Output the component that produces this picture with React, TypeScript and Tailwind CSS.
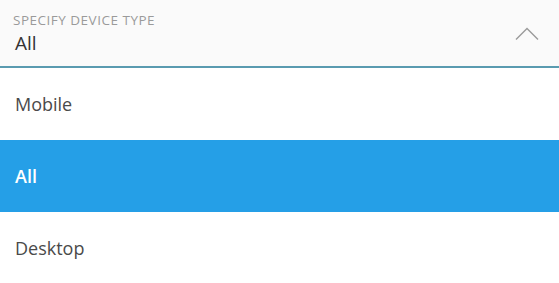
import React from "react";

const options = ["Mobile", "All", "Desktop"];

const App: React.FC = () => {
  const selected = "All";

  return (
    <div className="w-[559px] h-[283px] bg-white overflow-hidden" style={{ fontFamily: '"Open Sans", "Noto Sans", sans-serif' }}>
      <div className="h-[68px] bg-[#fafafa] border-b-2 border-[#5a9bb0] pl-[13px] pr-[20px] flex items-center justify-between">
        <div className="flex flex-col pt-[2px]">
          <span className="text-[13.5px] leading-[14px] text-[#9a9a9a] tracking-[0.5px]">SPECIFY DEVICE TYPE</span>
          <span className="text-[19px] leading-[24px] text-[#333] mt-[4px] pl-[2px]">{selected}</span>
        </div>
        <svg width="24" height="14" viewBox="0 0 24 14" className="mt-[2px]">
          <path d="M1 12.5 L12 1.5 L23 12.5" fill="none" stroke="#9a9a9a" strokeWidth="1.4" />
        </svg>
      </div>
      <ul className="flex flex-col">
        {options.map((opt) => (
          <li
            key={opt}
            className={
              opt === selected
                ? "h-[72px] flex items-center px-[15px] bg-[#259fe7] text-white text-[18px] font-semibold"
                : "h-[72px] flex items-center px-[15px] text-[#4a4a4a] text-[18px]"
            }
          >
            {opt}
          </li>
        ))}
      </ul>
    </div>
  );
};

export default App;
